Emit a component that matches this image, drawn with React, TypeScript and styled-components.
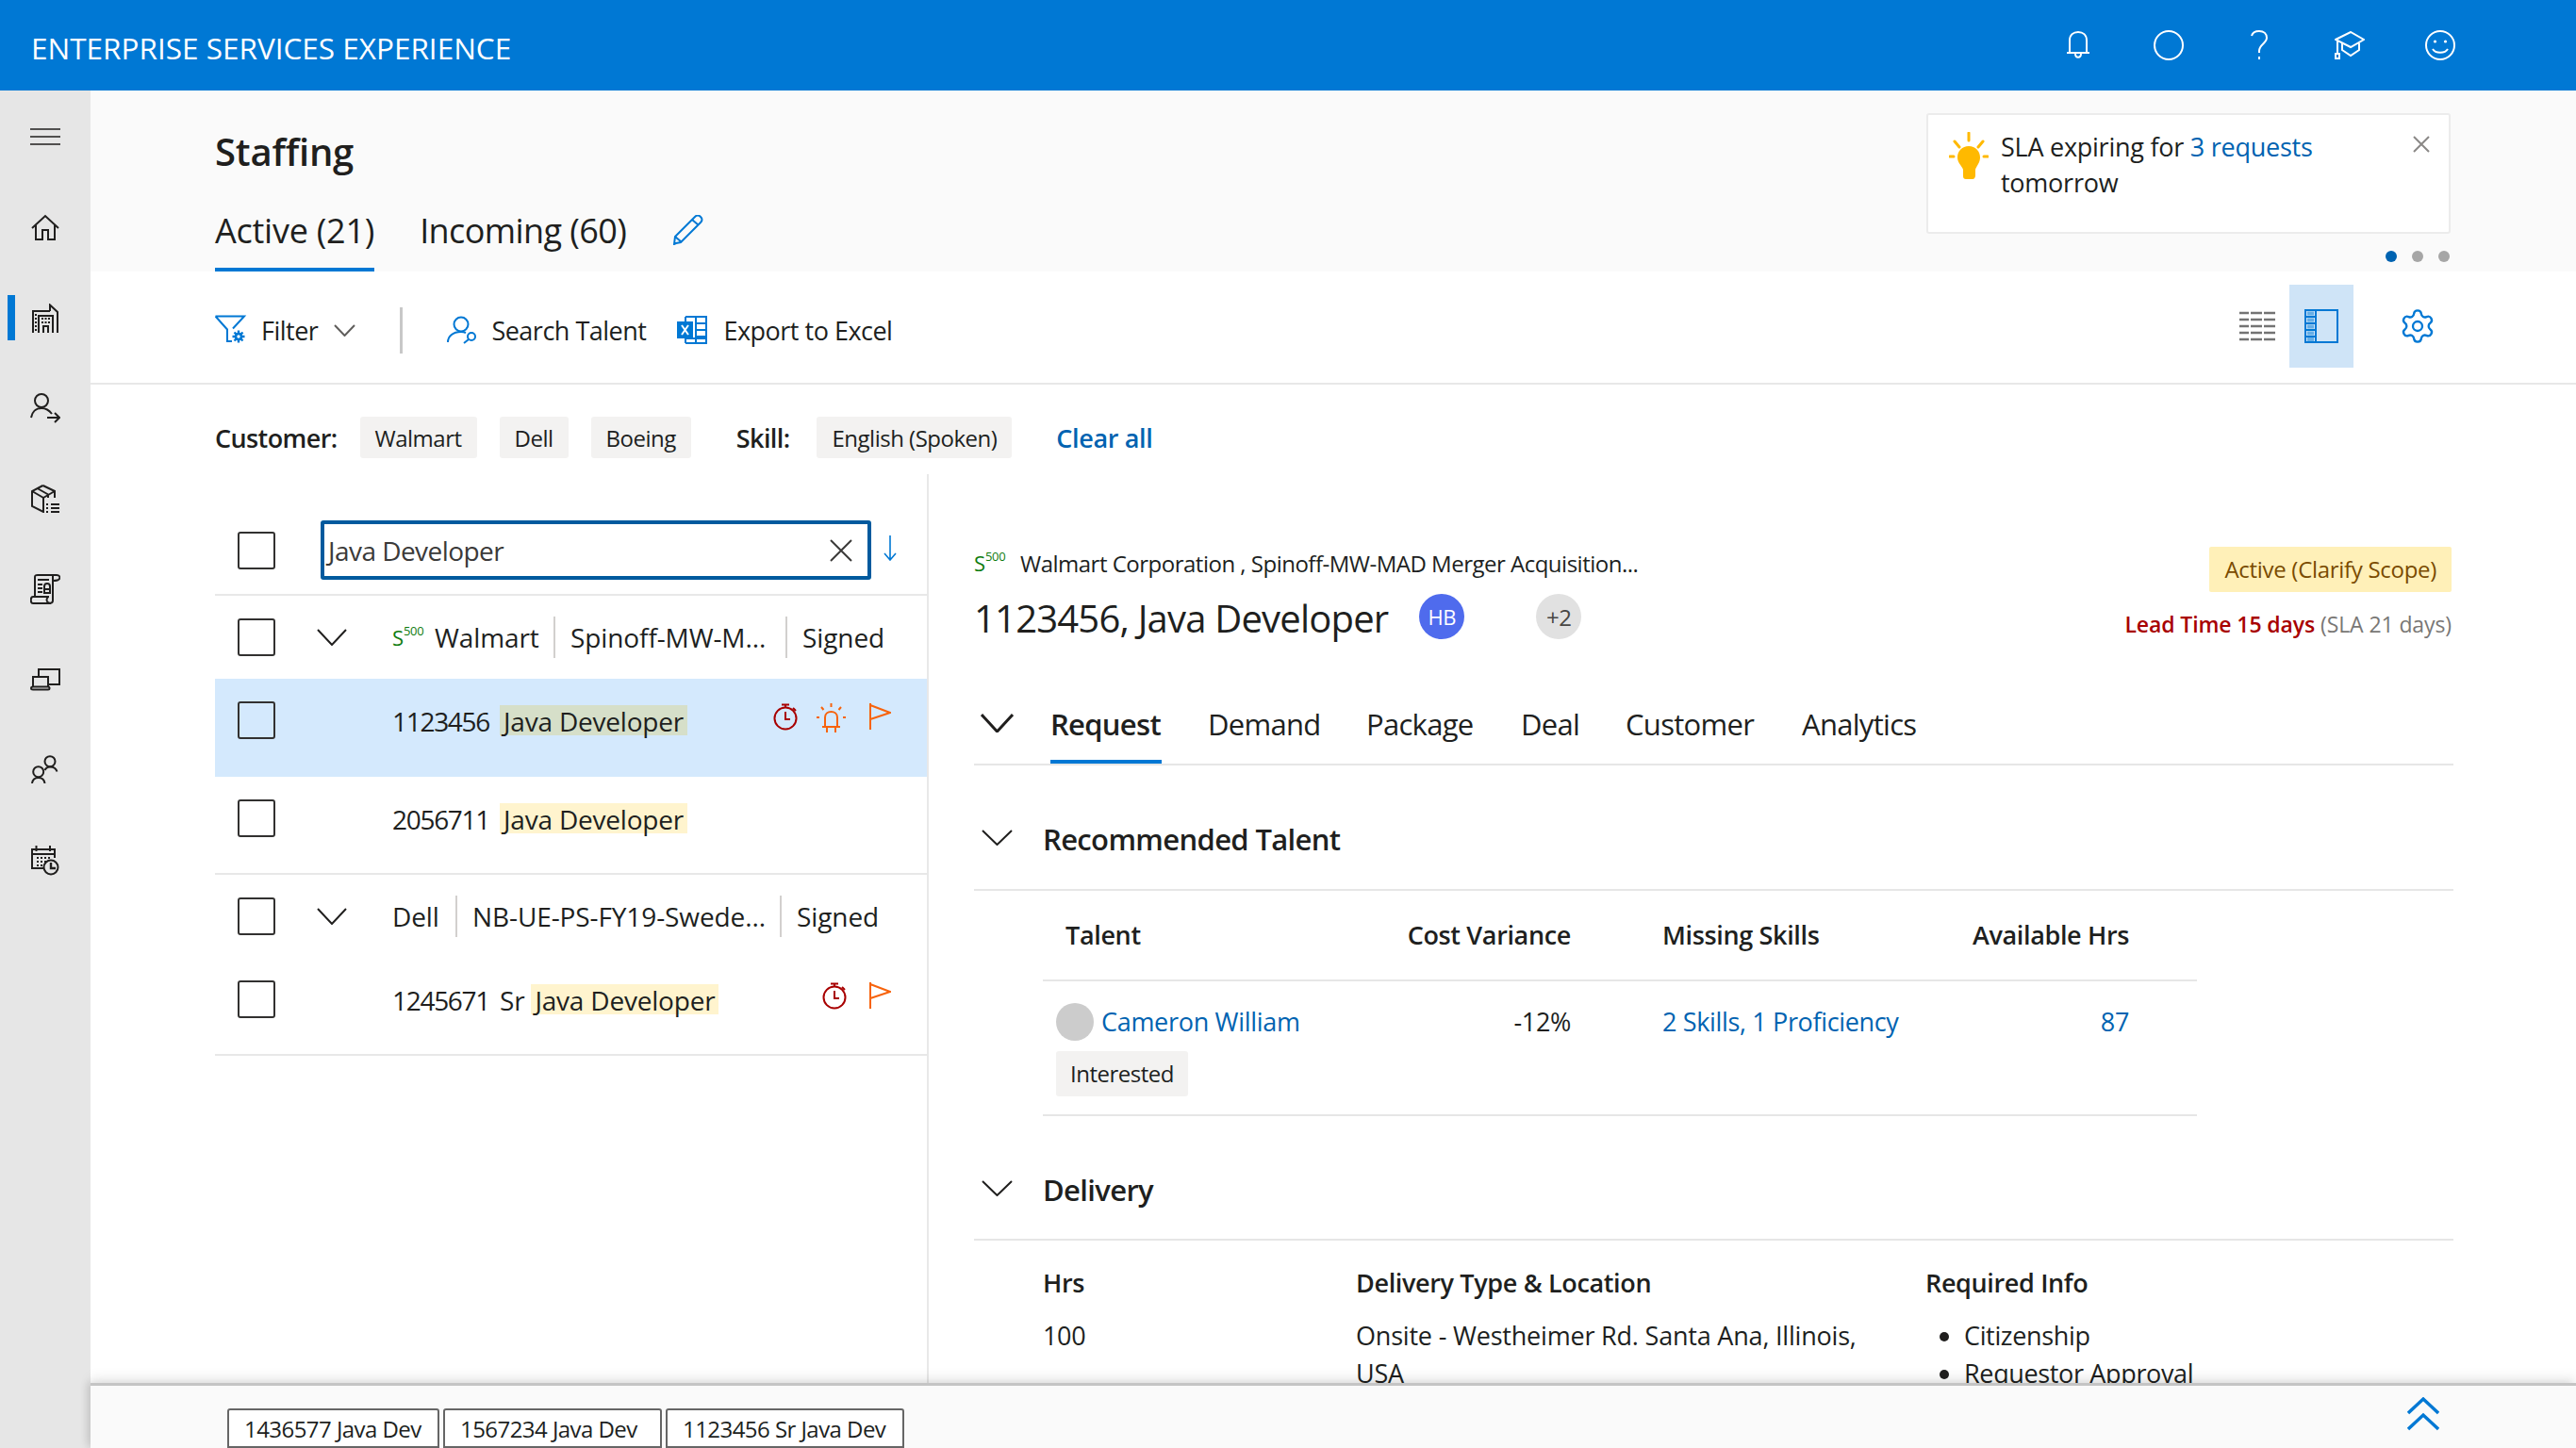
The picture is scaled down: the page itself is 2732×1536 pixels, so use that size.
import React from "react";
import styled, { createGlobalStyle } from "styled-components";
import { Settings } from "lucide-react";

const GlobalStyle = createGlobalStyle`
  html, body {
    margin: 0;
    padding: 0;
    background: #ffffff;
  }
  * {
    box-sizing: border-box;
  }
`;

const Page = styled.div`
  width: 2732px;
  height: 1536px;
  display: flex;
  flex-direction: column;
  overflow: hidden;
  color: #201f1e;
  font-family: "Open Sans", "Noto Sans", sans-serif;
  font-size: 27px;
  letter-spacing: -0.35px;
`;

const TopBar = styled.header`
  height: 96px;
  flex: none;
  display: flex;
  align-items: center;
  padding: 4px 96px 0 33px;
  background: #0078d4;
  color: #ffffff;
`;

const AppTitle = styled.div`
  font-size: 31.5px;
  font-weight: 500;
  letter-spacing: 0;
`;

const TopIcons = styled.div`
  margin: -4px 0 0 auto;
  display: flex;
`;

const TopIcon = styled.div`
  width: 96px;
  height: 96px;
  display: flex;
  align-items: center;
  justify-content: center;
`;

const Body = styled.div`
  flex: 1;
  min-height: 0;
  display: flex;
`;

const Sidebar = styled.nav`
  width: 96px;
  flex: none;
  padding-top: 1px;
  background: #e6e6e6;
`;

const SideItem = styled.div`
  position: relative;
  height: 96px;
  display: flex;
  align-items: center;
  justify-content: center;
  color: #201f1e;
`;

const ActiveMark = styled.span`
  position: absolute;
  left: 8px;
  top: 24px;
  width: 8px;
  height: 48px;
  background: #0078d4;
`;

const Main = styled.main`
  flex: 1;
  min-width: 0;
  display: flex;
  flex-direction: column;
`;

const HeadSection = styled.section`
  height: 192px;
  flex: none;
  display: flex;
  justify-content: space-between;
  padding: 0 133px 0 132px;
  background: #fafafa;
`;

const HeadLeft = styled.div`
  display: flex;
  flex-direction: column;
`;

const PageTitle = styled.h1`
  margin: 37px 0 0;
  font-size: 40px;
  line-height: 56px;
  font-weight: 600;
  letter-spacing: -0.2px;
`;

const HeadTabs = styled.div`
  margin-top: auto;
  display: flex;
  align-items: flex-start;
  gap: 48px;
`;

const HeadTab = styled.div<{ $active?: boolean }>`
  height: 68px;
  font-size: 36px;
  line-height: 50px;
  letter-spacing: ${(p) => (p.$active ? "-0.25px" : "-0.6px")};
  font-weight: ${(p) => (p.$active ? 500 : 400)};
  border-bottom: 4px solid ${(p) => (p.$active ? "#0078d4" : "transparent")};
`;

const EditIcon = styled.div`
  display: flex;
  margin: 8px 0 0 2px;
  color: #0078d4;
`;

const NoticeColumn = styled.div`
  width: 556px;
  padding-top: 24px;
`;

const NoticeCard = styled.div`
  position: relative;
  height: 128px;
  display: flex;
  gap: 13px;
  padding: 15px 40px 0 22px;
  background: #ffffff;
  border: 2px solid #ececec;
  border-radius: 3px;
  line-height: 38px;
  letter-spacing: -0.25px;
`;

const BulbSlot = styled.div`
  display: flex;
  margin-top: 3px;
`;

const NoticeClose = styled.div`
  position: absolute;
  right: 20px;
  top: 22px;
  display: flex;
  color: #8a8886;
`;

const NoticeLink = styled.span`
  color: #0063b1;
`;

const Dots = styled.div`
  margin-top: 18px;
  padding-right: 1px;
  display: flex;
  justify-content: flex-end;
  gap: 16px;
`;

const Dot = styled.span<{ $on?: boolean }>`
  width: 12px;
  height: 12px;
  border-radius: 50%;
  background: ${(p) => (p.$on ? "#0063b1" : "#a6a6a6")};
`;

const Toolbar = styled.div`
  height: 120px;
  flex: none;
  display: flex;
  align-items: flex-start;
  padding: 14px 134px 0 132px;
  border-bottom: 2px solid #e8e8e8;
`;

const ToolGroup = styled.div`
  height: 96px;
  display: flex;
  align-items: center;
  letter-spacing: -0.5px;
`;

const ToolSlot = styled.span<{ $left: number }>`
  display: flex;
  margin-left: ${(p) => p.$left}px;
`;

const ToolChevron = styled(ToolSlot)`
  color: #605e5c;
`;

const ToolSeparator = styled.span`
  width: 3px;
  height: 49px;
  margin: 0 47px;
  background: #c8c8c8;
`;

const ViewGroup = styled.div`
  margin-left: auto;
  display: flex;
  align-items: flex-start;
`;

const ViewButton = styled.div<{ $active?: boolean; $left?: number }>`
  width: 68px;
  height: 88px;
  margin-left: ${(p) => p.$left ?? 0}px;
  display: flex;
  align-items: center;
  justify-content: center;
  background: ${(p) => (p.$active ? "#cfe4f7" : "transparent")};
`;

const FilterRow = styled.div`
  height: 95px;
  flex: none;
  display: flex;
  align-items: flex-start;
  padding: 34px 0 0 132px;
`;

const FilterLabel = styled.div<{ $left?: number; $right?: number }>`
  height: 44px;
  margin-left: ${(p) => p.$left ?? 0}px;
  margin-right: ${(p) => p.$right ?? 0}px;
  display: flex;
  align-items: center;
  font-weight: 600;
  letter-spacing: -0.6px;
`;

const Chip = styled.div`
  height: 44px;
  margin-left: 24px;
  display: flex;
  align-items: center;
  padding: 0 16px;
  background: #f3f2f1;
  border-radius: 3px;
  font-size: 24px;
  letter-spacing: -0.5px;
`;

const ClearAll = styled.div`
  height: 44px;
  display: flex;
  align-items: center;
  margin-left: 47px;
  color: #0063b1;
  font-weight: 600;
`;

const Split = styled.div`
  flex: 1;
  min-height: 0;
  display: flex;
  margin-left: 132px;
`;

const ListPane = styled.div`
  width: 757px;
  flex: none;
  border-right: 2px solid #e8e8e8;
  font-size: 28px;
  letter-spacing: -0.2px;
`;

const SearchRow = styled.div`
  height: 129px;
  display: flex;
  align-items: flex-start;
  padding: 49px 0 0 24px;
  border-bottom: 2px solid #e8e8e8;
`;

const Checkbox = styled.span<{ $top?: number }>`
  width: 40px;
  height: 40px;
  flex: none;
  margin-top: ${(p) => p.$top ?? 0}px;
  border: 2px solid #323130;
  border-radius: 3px;
`;

const SearchBox = styled.div`
  width: 584px;
  height: 63px;
  margin-left: 48px;
  display: flex;
  align-items: center;
  justify-content: space-between;
  padding: 0 16px 0 4px;
  border: 4px solid #005a9e;
  border-radius: 3px;
  color: #3b3a39;
  letter-spacing: -0.55px;
`;

const SortArrow = styled.div`
  display: flex;
  margin: 15px 0 0 13px;
  color: #0078d4;
`;

const GroupRow = styled.div`
  height: 88px;
  display: flex;
  align-items: center;
  padding-left: 24px;
`;

const GroupChevron = styled.div`
  width: 32px;
  margin: 0 48px 0 44px;
  display: flex;
`;

const GroupCell = styled.div<{ $w: number; $plain?: boolean }>`
  width: ${(p) => p.$w}px;
  flex: none;
  height: 44px;
  display: flex;
  align-items: center;
  white-space: nowrap;
  font-weight: ${(p) => (p.$plain ? 400 : 500)};
  letter-spacing: -0.1px;
`;

const CellDivider = styled.span`
  width: 2px;
  height: 44px;
  flex: none;
  margin: 0 16px 0 0;
  background: #d2d0ce;
`;

const ItemRow = styled.div<{ $selected?: boolean; $last?: boolean }>`
  height: 104px;
  display: flex;
  align-items: flex-start;
  padding: 24px 38px 0 24px;
  background: ${(p) => (p.$selected ? "#d4e9fd" : "transparent")};
  border-bottom: ${(p) => (p.$last ? "2px solid #e8e8e8" : "none")};
  font-weight: 500;
`;

const ItemText = styled.div`
  height: 32px;
  margin: 4px 0 0 124px;
  display: flex;
  align-items: center;
  white-space: nowrap;
`;

const ItemId = styled.span`
  width: 114px;
  padding-top: 2px;
  letter-spacing: -1.3px;
`;

const ItemPrefix = styled.span`
  margin-right: 7px;
  padding-top: 2px;
`;

const Mark = styled.span<{ $selected?: boolean }>`
  height: 32px;
  display: flex;
  align-items: center;
  padding: 2px 4px 0;
  background: ${(p) => (p.$selected ? "#d6dfc9" : "#fff4ce")};
`;

const ItemIcons = styled.div<{ $gap: number }>`
  margin: 2px 0 0 auto;
  display: flex;
  align-items: flex-start;
  gap: ${(p) => p.$gap}px;
`;

const S500 = styled.span`
  width: 45px;
  flex: none;
  display: inline-flex;
  align-items: flex-start;
  color: #107c10;
  font-size: 22px;
  line-height: 28px;
  font-weight: 500;
  letter-spacing: 0;
`;

const S500Sup = styled.span`
  font-size: 13px;
  line-height: 14px;
  letter-spacing: -0.4px;
`;

const DetailPane = styled.div`
  flex: 1;
  min-width: 0;
  overflow: hidden;
  padding: 0 130px 0 48px;
`;

const DetailHead = styled.div`
  height: 227px;
  display: flex;
  justify-content: space-between;
  padding-top: 77px;
`;

const Breadcrumb = styled.div`
  height: 28px;
  margin-top: 3px;
  display: flex;
  align-items: center;
  font-size: 24px;
  letter-spacing: -0.5px;
`;

const BreadcrumbMark = styled.span`
  display: flex;
  margin-right: 4px;
`;

const TitleRow = styled.div`
  margin-top: 19px;
  display: flex;
  align-items: center;
`;

const DetailTitle = styled.h2`
  margin: 0;
  font-size: 40px;
  line-height: 52px;
  font-weight: 500;
  letter-spacing: -0.8px;
`;

const Avatar = styled.span<{ $bg: string; $color: string; $left: number; $size: number }>`
  width: 48px;
  height: 48px;
  margin-left: ${(p) => p.$left}px;
  margin-top: -4px;
  display: flex;
  align-items: center;
  justify-content: center;
  border-radius: 50%;
  background: ${(p) => p.$bg};
  color: ${(p) => p.$color};
  font-size: ${(p) => p.$size}px;
`;

const DetailAside = styled.div`
  padding-right: 2px;
  display: flex;
  flex-direction: column;
  align-items: flex-end;
`;

const StatusBadge = styled.div`
  height: 48px;
  display: flex;
  align-items: center;
  padding: 0 16px 2px;
  background: #fff0b8;
  border-radius: 2px;
  color: #7a4b00;
  font-size: 24px;
  letter-spacing: -0.3px;
`;

const LeadTime = styled.div`
  margin-top: 18px;
  font-size: 23px;
  line-height: 32px;
  color: #797775;
  letter-spacing: -0.1px;
`;

const LeadStrong = styled.span`
  color: #a80000;
  font-weight: 600;
`;

const DetailTabs = styled.div`
  height: 82px;
  display: flex;
  align-items: flex-start;
  border-bottom: 2px solid #e6e6e6;
`;

const TabChevron = styled.div`
  width: 81px;
  display: flex;
  margin-top: 27px;
  padding-left: 7px;
`;

const DetailTab = styled.div<{ $active?: boolean; $w: number }>`
  width: ${(p) => p.$w}px;
  height: 80px;
  padding-top: 17px;
  font-size: 31px;
  line-height: 42px;
  white-space: nowrap;
  letter-spacing: -0.7px;
  font-weight: ${(p) => (p.$active ? 600 : 400)};
`;

const TabBar = styled.span`
  display: block;
  width: 118px;
  height: 4px;
  margin-top: 17px;
  background: #0078d4;
`;

const SectionHead = styled.div<{ $h: number }>`
  height: ${(p) => p.$h}px;
  display: flex;
  align-items: flex-start;
  padding-top: 56px;
  border-bottom: 2px solid #e6e6e6;
`;

const SectionChevron = styled.div`
  width: 73px;
  display: flex;
  padding: 12px 0 0 8px;
`;

const SectionTitle = styled.div`
  font-size: 31px;
  line-height: 44px;
  font-weight: 600;
  letter-spacing: -0.65px;
`;

const TalentTable = styled.div`
  width: 1224px;
  margin-left: 73px;
  display: grid;
  grid-template-columns: 380px 249px 342px 253px;
`;

const HeadCell = styled.div<{ $right?: boolean; $pad: number }>`
  height: 96px;
  padding-top: 27px;
  line-height: 40px;
  font-weight: 600;
  border-bottom: 2px solid #e6e6e6;
  text-align: ${(p) => (p.$right ? "right" : "left")};
  ${(p) => (p.$right ? "padding-right" : "padding-left")}: ${(p) => p.$pad}px;
`;

const BodyCell = styled.div<{ $right?: boolean; $pad: number; $link?: boolean }>`
  height: 143px;
  padding-top: 23px;
  line-height: 40px;
  border-bottom: 2px solid #e6e6e6;
  text-align: ${(p) => (p.$right ? "right" : "left")};
  color: ${(p) => (p.$link ? "#0063b1" : "#201f1e")};
  ${(p) => (p.$right ? "padding-right" : "padding-left")}: ${(p) => p.$pad}px;
`;

const TalentName = styled.div`
  display: flex;
  align-items: center;
  gap: 8px;
  color: #0063b1;
  letter-spacing: -0.3px;
`;

const TalentAvatar = styled.span`
  width: 40px;
  height: 40px;
  border-radius: 50%;
  background: #cccccc;
`;

const TalentChip = styled.span`
  width: 140px;
  height: 48px;
  margin-top: 11px;
  display: flex;
  align-items: center;
  justify-content: center;
  background: #f3f2f1;
  border-radius: 3px;
  font-size: 24px;
  letter-spacing: -0.5px;
`;

const DeliveryGrid = styled.div`
  margin-left: 73px;
  padding-top: 25px;
  display: grid;
  grid-template-columns: 332px 604px 1fr;
  row-gap: 16px;
  line-height: 40px;
`;

const DeliveryHead = styled.div`
  font-weight: 600;
`;

const Wrapped = styled.div`
  width: 560px;
  letter-spacing: -0.2px;
`;

const InfoList = styled.ul`
  margin: 0;
  padding: 0 0 0 41px;
  list-style: disc;
`;

const Footer = styled.footer`
  position: relative;
  height: 69px;
  flex: none;
  display: flex;
  align-items: flex-start;
  justify-content: space-between;
  padding: 24px 145px 0 145px;
  background: #fafafa;
  border-top: 3px solid #c4c4c4;
  box-shadow: 0 -6px 12px rgba(0, 0, 0, 0.08), -4px 0 8px rgba(0, 0, 0, 0.1);
`;

const OpenTabs = styled.div`
  display: flex;
  gap: 4px;
`;

const OpenTab = styled.div<{ $w: number }>`
  width: ${(p) => p.$w}px;
  height: 42px;
  display: flex;
  align-items: center;
  padding-left: 16px;
  background: #ffffff;
  border: 2px solid #666666;
  border-radius: 3px 3px 0 0;
  font-size: 24px;
  letter-spacing: -0.55px;
`;

const CollapseUp = styled.div`
  display: flex;
  margin-top: -12px;
  color: #0078d4;
`;

const lineIcon = {
  fill: "none",
  stroke: "currentColor",
  strokeWidth: 2,
} as const;

const Chevron = ({ w = 32, h = 18, weight = 2 }: { w?: number; h?: number; weight?: number }) => (
  <svg width={w} height={h} viewBox={`0 0 ${w} ${h}`} {...lineIcon} strokeWidth={weight}>
    <path d={`M1 1 L${w / 2} ${h - 1} L${w - 1} 1`} />
  </svg>
);

const CloseX = ({ size }: { size: number }) => (
  <svg width={size} height={size} viewBox={`0 0 ${size} ${size}`} {...lineIcon}>
    <path d={`M1 1 L${size - 1} ${size - 1} M${size - 1} 1 L1 ${size - 1}`} />
  </svg>
);

const BellIcon = () => (
  <svg width="26" height="30" viewBox="0 0 26 30" {...lineIcon}>
    <path d="M1 23 H25 M4 23 V10 C4 4 8 1 13 1 C18 1 22 4 22 10 V23 M10 24 C10 29 16 29 16 24" />
  </svg>
);

const RingIcon = () => (
  <svg width="32" height="32" viewBox="0 0 32 32" {...lineIcon}>
    <circle cx="16" cy="16" r="15" />
  </svg>
);

const HelpIcon = () => (
  <svg width="20" height="32" viewBox="0 0 20 32" {...lineIcon}>
    <path d="M2 6 C3 2 7 1 10 1 C15 1 18 4 18 8 C18 14 10 15 10 22 V24 M10 28 V31" />
  </svg>
);

const CapIcon = () => (
  <svg width="32" height="30" viewBox="0 0 32 30" {...lineIcon}>
    <path d="M1 9 L17 1 L31 9 L17 17 Z M8 13 V20 L17 26 L26 20 V13 M3 10 V24" />
    <rect x="1" y="24" width="4" height="5" />
  </svg>
);

const SmileIcon = () => (
  <svg width="32" height="32" viewBox="0 0 32 32" {...lineIcon}>
    <circle cx="16" cy="16" r="15" />
    <circle cx="10.5" cy="12" r="1.6" fill="currentColor" stroke="none" />
    <circle cx="21.5" cy="12" r="1.6" fill="currentColor" stroke="none" />
    <path d="M8 20 C11 25 21 25 24 20" />
  </svg>
);

const MenuIcon = () => (
  <svg width="32" height="18" viewBox="0 0 32 18" fill="none" stroke="currentColor" strokeWidth="1.6">
    <path d="M0 1 H32 M0 9 H32 M0 17 H32" />
  </svg>
);

const HomeIcon = () => (
  <svg width="30" height="28" viewBox="0 0 30 28" {...lineIcon}>
    <path d="M1 15 L15 2 L29 15 M5 12 V27 H12 V17 H18 V27 H25 V12" />
  </svg>
);

const BuildingIcon = () => (
  <svg width="28" height="31" viewBox="0 0 28 31" {...lineIcon}>
    <path d="M1 31 V8 H19 M7 31 V13 H22 V31 M19 8 V1.5 L27 9 V31 M12 31 V24 H17 V31" />
    <path d="M4 11 V29 M11 15 V22 M14.5 15 V22 M18 15 V22" strokeDasharray="2 2" />
  </svg>
);

const PersonArrowIcon = () => (
  <svg width="32" height="32" viewBox="0 0 32 32" {...lineIcon}>
    <circle cx="12" cy="8" r="7" />
    <path d="M1 26 C2 20 6 16 12 16 C16 16 20 18 23 22 M18 26 H31 M26 21 L31 26 L26 31" />
  </svg>
);

const BoxListIcon = () => (
  <svg width="30" height="30" viewBox="0 0 30 30" {...lineIcon}>
    <path d="M12.5 1 L25 7 V14 M12.5 1 L1 7 V23 L13 29 V14 L1 7 M13 14 L25 7 M6.5 4 L18 10.5 V14" />
    <path d="M16 21 H18 M21 21 H30 M16 25 H18 M21 25 H30 M16 29 H18 M21 29 H30" />
  </svg>
);

const ScrollIcon = () => (
  <svg width="32" height="32" viewBox="0 0 32 32" {...lineIcon}>
    <path d="M5 24 V3 C5 1 6 1 8 1 H28 C31 1 32 3 31 5 C30 7 27 7 24 7 M24 2 V28 C24 31 20 32 18 29 C17 27 18 24 20 24 H3 C0 24 0 31 3 31 H22" />
    <path d="M8 6 H20 M8 11 H13 M8 15 H13 M8 19 H13 M15 20 V13 C15 9 21 9 21 13 V20 Z M15 16 H21" />
  </svg>
);

const DevicesIcon = () => (
  <svg width="32" height="24" viewBox="0 0 32 24" {...lineIcon}>
    <path d="M9 9 V1 H31 V17 H20 M3 19 V9 H19 V19" />
    <path d="M1 21 C1 19.5 2 19.5 3 19.5 H19 C21 19.5 21 22.5 19 22.5 H3 C2 22.5 1 22.5 1 21 Z" />
  </svg>
);

const PeopleIcon = () => (
  <svg width="30" height="32" viewBox="0 0 30 32" {...lineIcon}>
    <circle cx="20" cy="6.7" r="5.5" />
    <circle cx="7.7" cy="17.7" r="5.5" />
    <path d="M14.5 16 C15.5 14 17 12.5 20 12.5 C23 12.5 26.5 14 27.5 17.5 M1 30 C1.5 26 4 24 7.7 24 C11 24 14 26 14.5 30" />
  </svg>
);

const CalendarClockIcon = () => (
  <svg width="30" height="32" viewBox="0 0 30 32" {...lineIcon}>
    <path d="M13 24 H1 V4 H25 V13 M1 9 H25 M5.5 0 V6 M20 0 V6" />
    <path d="M6 13 H8 M10 13 H12 M14 13 H16 M18 13 H20 M6 17 H8 M10 17 H12 M14 17 H16 M6 21 H8 M10 21 H12" />
    <circle cx="21" cy="23" r="7.5" />
    <path d="M21 18 V24 H26" strokeWidth="2.4" />
  </svg>
);

const PencilIcon = () => (
  <svg width="32" height="32" viewBox="0 0 32 32" {...lineIcon}>
    <path d="M3 30 L1 31 L2 23 L23 2 C25 0 27 0 29 2 C31 4 31 6 29 8 L8 29 Z M2 23 L9 29 M20 5 L27 11" />
  </svg>
);

const FilterGearIcon = () => (
  <svg width="34" height="32" viewBox="0 0 34 32" fill="none" stroke="#0078d4" strokeWidth="2">
    <path d="M0.5 1.5 H31 L19 14.5 M0.5 1.5 L13 15.5 V28 H18" />
    <circle cx="25" cy="23" r="3" strokeWidth="2.6" />
    <path d="M25 16.5 V19 M25 27 V29.5 M18.5 23 H21 M29 23 H31.5 M20.5 18.5 L22.5 20.5 M27.5 25.5 L29.5 27.5 M29.5 18.5 L27.5 20.5 M22.5 25.5 L20.5 27.5" strokeWidth="2.4" />
  </svg>
);

const SearchPersonIcon = () => (
  <svg width="32" height="30" viewBox="0 0 32 30" fill="none" stroke="#0078d4" strokeWidth="2">
    <circle cx="15" cy="9" r="7.5" />
    <path d="M1 28 C1 22 6 17 15 17 C17 17 19 17.5 20 18" />
    <circle cx="26" cy="22" r="4" />
    <path d="M23 25 L18 29" />
  </svg>
);

const ExcelIcon = () => (
  <svg width="32" height="30" viewBox="0 0 32 30">
    <path d="M9 1 H31 V29 H9 M9 1 V6 M9 24 V29 M20 1 V29 M20 8 H31 M20 15 H31 M20 22 H31 M9 24 H31" fill="none" stroke="#0078d4" strokeWidth="2" />
    <rect x="0" y="6" width="17" height="18" fill="#0078d4" />
    <path d="M5 10 L12 20 M12 10 L5 20" stroke="#ffffff" strokeWidth="2" fill="none" />
  </svg>
);

const ListViewIcon = () => (
  <svg width="38" height="32" viewBox="0 0 38 32" fill="none" stroke="#737373" strokeWidth="2.4">
    <path d="M0 2 H10 M12 2 H24 M26 2 H38 M0 9 H10 M12 9 H24 M26 9 H38 M0 16 H10 M12 16 H24 M26 16 H38 M0 23 H10 M12 23 H24 M26 23 H38 M0 30 H10 M12 30 H24 M26 30 H38" />
  </svg>
);

const PaneViewIcon = () => (
  <svg width="36" height="36" viewBox="0 0 36 36" fill="none" stroke="#0078d4" strokeWidth="2">
    <rect x="1" y="1" width="34" height="34" />
    <path d="M12 1 V35 M1 8 H12 M1 15 H12 M1 22 H12 M1 29 H12" />
    <path d="M3 4.5 H10 M3 11.5 H10 M3 18.5 H10 M3 25.5 H10 M3 32 H10" stroke="#66aee6" strokeWidth="4" />
  </svg>
);

const BulbIcon = () => (
  <svg width="42" height="50" viewBox="0 0 42 50" fill="#ffb900" stroke="none">
    <path d="M21 15 C28 15 33 20 33 27 C33 33 29 36 28 40 V46 C28 48 27 50 25 50 H18 C16 50 15 49 15 47 V40 C14 36 9 33 9 27 C9 20 14 15 21 15 Z" />
    <path d="M21 1 V9 M6 10 L11 16 M36 10 L31 16 M1 26 H5 M37 26 H41" stroke="#ffb900" strokeWidth="3" fill="none" strokeLinecap="round" />
  </svg>
);

const TimerIcon = () => (
  <svg width="26" height="29" viewBox="0 0 26 29" fill="none" stroke="#a80000" strokeWidth="2">
    <circle cx="13" cy="16" r="11.5" />
    <path d="M13 9 V17 H18 M9 1.5 H17 M13 2 V5 M21 5 L24 8" />
  </svg>
);

const AlarmIcon = () => (
  <svg width="36" height="32" viewBox="0 0 36 32" fill="none" stroke="#f7630c" strokeWidth="2">
    <path d="M9 25 V15 C9 11 12 9 15.5 9 C19 9 22 11 22 15 V25 M6 25 H25 M11 25 V31 M20 25 V31 M15.5 0 V4 M5 4 L7.5 7 M26 4 L23.5 7 M0 15 H3 M28 15 H31" />
  </svg>
);

const FlagIcon = () => (
  <svg width="23" height="28" viewBox="0 0 23 28" fill="none" stroke="#f7630c" strokeWidth="2">
    <path d="M1 0 V28 M1 2 L22 10 L1 17" />
  </svg>
);

const DownArrow = () => (
  <svg width="14" height="28" viewBox="0 0 14 28" fill="none" stroke="currentColor" strokeWidth="1.6">
    <path d="M7 1 V27 M1 20 L7 27 L13 20" />
  </svg>
);

const DoubleUp = () => (
  <svg width="34" height="36" viewBox="0 0 34 36" fill="none" stroke="currentColor" strokeWidth="3.4">
    <path d="M1 17 L17 2 L33 17 M1 34 L17 19 L33 34" />
  </svg>
);

const navIcons = [
  <HomeIcon key="home" />,
  <BuildingIcon key="building" />,
  <PersonArrowIcon key="person" />,
  <BoxListIcon key="box" />,
  <ScrollIcon key="scroll" />,
  <DevicesIcon key="devices" />,
  <PeopleIcon key="people" />,
  <CalendarClockIcon key="calendar" />,
];

const S500Mark = () => (
  <S500>
    S<S500Sup>500</S500Sup>
  </S500>
);

const App: React.FC = () => {
  return (
    <Page>
      <GlobalStyle />
      <TopBar>
        <AppTitle>ENTERPRISE SERVICES EXPERIENCE</AppTitle>
        <TopIcons>
          <TopIcon><BellIcon /></TopIcon>
          <TopIcon><RingIcon /></TopIcon>
          <TopIcon><HelpIcon /></TopIcon>
          <TopIcon><CapIcon /></TopIcon>
          <TopIcon><SmileIcon /></TopIcon>
        </TopIcons>
      </TopBar>
      <Body>
        <Sidebar>
          <SideItem><MenuIcon /></SideItem>
          {navIcons.map((icon, i) => (
            <SideItem key={i}>
              {i === 1 && <ActiveMark />}
              {icon}
            </SideItem>
          ))}
        </Sidebar>
        <Main>
          <HeadSection>
            <HeadLeft>
              <PageTitle>Staffing</PageTitle>
              <HeadTabs>
                <HeadTab $active>Active (21)</HeadTab>
                <HeadTab>Incoming (60)</HeadTab>
                <EditIcon><PencilIcon /></EditIcon>
              </HeadTabs>
            </HeadLeft>
            <NoticeColumn>
              <NoticeCard>
                <BulbSlot><BulbIcon /></BulbSlot>
                <div>
                  SLA expiring for <NoticeLink>3 requests</NoticeLink>
                  <br />
                  tomorrow
                </div>
                <NoticeClose><CloseX size={18} /></NoticeClose>
              </NoticeCard>
              <Dots>
                <Dot $on />
                <Dot />
                <Dot />
              </Dots>
            </NoticeColumn>
          </HeadSection>

          <Toolbar>
            <ToolGroup>
              <FilterGearIcon />
              <ToolSlot $left={15}>Filter</ToolSlot>
              <ToolChevron $left={17}><Chevron w={23} h={13} /></ToolChevron>
              <ToolSeparator />
              <SearchPersonIcon />
              <ToolSlot $left={15}>Search Talent</ToolSlot>
              <ToolSlot $left={33}><ExcelIcon /></ToolSlot>
              <ToolSlot $left={17}>Export to Excel</ToolSlot>
            </ToolGroup>
            <ViewGroup>
              <ViewButton><ListViewIcon /></ViewButton>
              <ViewButton $active><PaneViewIcon /></ViewButton>
              <ViewButton $left={34}>
                <Settings size={40} color="#0078d4" strokeWidth={1.4} />
              </ViewButton>
            </ViewGroup>
          </Toolbar>

          <FilterRow>
            <FilterLabel>Customer:</FilterLabel>
            <Chip>Walmart</Chip>
            <Chip>Dell</Chip>
            <Chip>Boeing</Chip>
            <FilterLabel $left={48} $right={5}>Skill:</FilterLabel>
            <Chip>English (Spoken)</Chip>
            <ClearAll>Clear all</ClearAll>
          </FilterRow>

          <Split>
            <ListPane>
              <SearchRow>
                <Checkbox $top={12} />
                <SearchBox>
                  Java Developer
                  <CloseX size={24} />
                </SearchBox>
                <SortArrow><DownArrow /></SortArrow>
              </SearchRow>

              <GroupRow>
                <Checkbox />
                <GroupChevron><Chevron /></GroupChevron>
                <S500Mark />
                <GroupCell $w={126}>Walmart</GroupCell>
                <CellDivider />
                <GroupCell $w={228}>Spinoff-MW-M...</GroupCell>
                <CellDivider />
                <GroupCell $w={100} $plain>Signed</GroupCell>
              </GroupRow>

              <ItemRow $selected>
                <Checkbox />
                <ItemText>
                  <ItemId>1123456</ItemId>
                  <Mark $selected>Java Developer</Mark>
                </ItemText>
                <ItemIcons $gap={20}>
                  <TimerIcon />
                  <AlarmIcon />
                  <FlagIcon />
                </ItemIcons>
              </ItemRow>

              <ItemRow $last>
                <Checkbox />
                <ItemText>
                  <ItemId>2056711</ItemId>
                  <Mark>Java Developer</Mark>
                </ItemText>
              </ItemRow>

              <GroupRow>
                <Checkbox />
                <GroupChevron><Chevron /></GroupChevron>
                <GroupCell $w={67}>Dell</GroupCell>
                <CellDivider />
                <GroupCell $w={326}>NB-UE-PS-FY19-Swede...</GroupCell>
                <CellDivider />
                <GroupCell $w={100} $plain>Signed</GroupCell>
              </GroupRow>

              <ItemRow $last>
                <Checkbox />
                <ItemText>
                  <ItemId>1245671</ItemId>
                  <ItemPrefix>Sr</ItemPrefix>
                  <Mark>Java Developer</Mark>
                </ItemText>
                <ItemIcons $gap={24}>
                  <TimerIcon />
                  <FlagIcon />
                </ItemIcons>
              </ItemRow>
            </ListPane>

            <DetailPane>
              <DetailHead>
                <div>
                  <Breadcrumb>
                    <BreadcrumbMark><S500Mark /></BreadcrumbMark>
                    Walmart Corporation , Spinoff-MW-MAD Merger Acquisition...
                  </Breadcrumb>
                  <TitleRow>
                    <DetailTitle>1123456, Java Developer</DetailTitle>
                    <Avatar $bg="#4f6bed" $color="#ffffff" $left={33} $size={22}>HB</Avatar>
                    <Avatar $bg="#e1e1e1" $color="#484644" $left={76} $size={24}>+2</Avatar>
                  </TitleRow>
                </div>
                <DetailAside>
                  <StatusBadge>Active (Clarify Scope)</StatusBadge>
                  <LeadTime>
                    <LeadStrong>Lead Time 15 days</LeadStrong> (SLA 21 days)
                  </LeadTime>
                </DetailAside>
              </DetailHead>

              <DetailTabs>
                <TabChevron><Chevron w={35} h={20} weight={3} /></TabChevron>
                <DetailTab $active $w={167}>
                  Request
                  <TabBar />
                </DetailTab>
                <DetailTab $w={168}>Demand</DetailTab>
                <DetailTab $w={164}>Package</DetailTab>
                <DetailTab $w={111}>Deal</DetailTab>
                <DetailTab $w={187}>Customer</DetailTab>
                <DetailTab $w={150}>Analytics</DetailTab>
              </DetailTabs>

              <SectionHead $h={133}>
                <SectionChevron><Chevron w={33} h={17} /></SectionChevron>
                <SectionTitle>Recommended Talent</SectionTitle>
              </SectionHead>

              <TalentTable>
                <HeadCell $pad={24}>Talent</HeadCell>
                <HeadCell $right $pad={69}>Cost Variance</HeadCell>
                <HeadCell $pad={28}>Missing Skills</HeadCell>
                <HeadCell $right $pad={72}>Available Hrs</HeadCell>
                <BodyCell $pad={14}>
                  <TalentName>
                    <TalentAvatar />
                    Cameron William
                  </TalentName>
                  <TalentChip>Interested</TalentChip>
                </BodyCell>
                <BodyCell $right $pad={69}>-12%</BodyCell>
                <BodyCell $pad={28} $link>2 Skills, 1 Proficiency</BodyCell>
                <BodyCell $right $pad={72} $link>87</BodyCell>
              </TalentTable>

              <SectionHead $h={132}>
                <SectionChevron><Chevron w={33} h={17} /></SectionChevron>
                <SectionTitle>Delivery</SectionTitle>
              </SectionHead>

              <DeliveryGrid>
                <DeliveryHead>Hrs</DeliveryHead>
                <DeliveryHead>Delivery Type &amp; Location</DeliveryHead>
                <DeliveryHead>Required Info</DeliveryHead>
                <div>100</div>
                <Wrapped>Onsite - Westheimer Rd. Santa Ana, Illinois, USA</Wrapped>
                <InfoList>
                  <li>Citizenship</li>
                  <li>Requestor Approval</li>
                </InfoList>
              </DeliveryGrid>
            </DetailPane>
          </Split>

          <Footer>
            <OpenTabs>
              <OpenTab $w={225}>1436577 Java Dev</OpenTab>
              <OpenTab $w={232}>1567234 Java Dev</OpenTab>
              <OpenTab $w={253}>1123456 Sr Java Dev</OpenTab>
            </OpenTabs>
            <CollapseUp><DoubleUp /></CollapseUp>
          </Footer>
        </Main>
      </Body>
    </Page>
  );
};

export default App;
